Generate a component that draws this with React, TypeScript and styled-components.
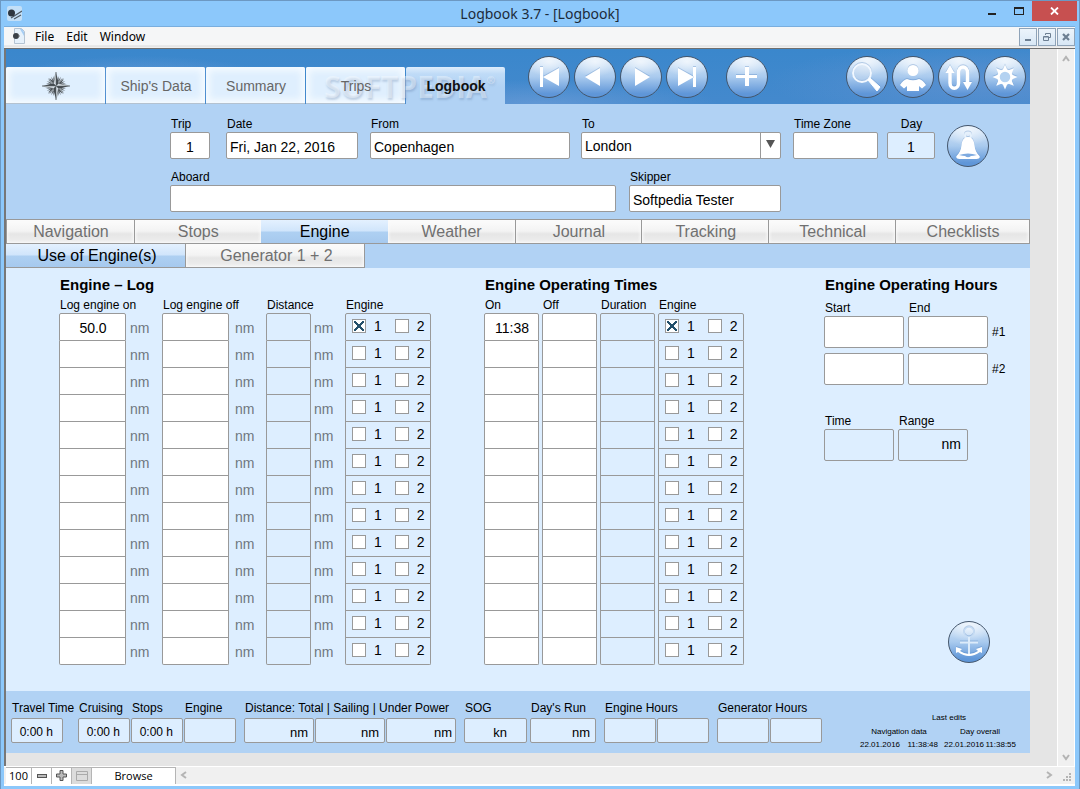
import React from "react";
import styled, { createGlobalStyle, css } from "styled-components";

const LINE = "#999999";
const PANEL = "#b1d2f4";
const PALE = "#ddeeff";

const GlobalStyle = createGlobalStyle`
  *, *::before, *::after { box-sizing: border-box; }
  body { margin: 0; font-family: "Liberation Sans", Arial, sans-serif; font-size: 12px; color: #000; }
  button, input, select { font-family: inherit; color: inherit; margin: 0; padding: 0; border-radius: 0; }
  button { background: none; border: 0; }
  svg { display: block; }
`;

/* ---------- window frame ---------- */

const Frame = styled.div`
  display: flex;
  flex-direction: column;
  min-width: 1080px;
  min-height: 100vh;
  padding: 0 4px 3px 3px;
  border: 1px solid #6c98c2;
  background: #8cc8fb;
`;

const TitleBar = styled.header`
  position: relative;
  display: flex;
  align-items: flex-start;
  justify-content: space-between;
  height: 26px;
  border-bottom: 1px solid #79aede;
`;

const AppIcon = styled.div`
  padding: 5px 0 0 3px;
`;

const Title = styled.h1`
  flex: 1;
  margin: 0;
  padding-left: 80px;
  font: 400 14px/26px "Noto Sans", "Open Sans", sans-serif;
  text-align: center;
  color: #1c2b3a;
`;

const WindowButtons = styled.div`
  display: flex;
  margin-right: -2px;
`;

const WindowButton = styled.button<{ $close?: boolean }>`
  display: flex;
  align-items: center;
  justify-content: center;
  width: ${(p) => (p.$close ? 45 : 27)}px;
  height: 20px;
  background: ${(p) => (p.$close ? "#c75050" : "transparent")};
`;

const Client = styled.div`
  display: flex;
  flex: 1;
  flex-direction: column;
  background: #fff;
`;

const MenuBar = styled.nav`
  display: flex;
  align-items: flex-start;
  height: 22px;
  padding: 1px 0 0 8px;
  border-bottom: 1px solid #6f6f6f;
  background: linear-gradient(#f5f6f7 18px, #dcdcdc 19px, #f0f0f0 20px);
`;

const MenuItem = styled.button`
  margin-left: 6px;
  padding: 0 3px;
  font: 12px/18px "Noto Sans", "Open Sans", sans-serif;
`;

const MdiButtons = styled.div`
  display: flex;
  gap: 1px;
  margin-left: auto;
`;

const MdiButton = styled.button`
  display: flex;
  align-items: center;
  justify-content: center;
  width: 18px;
  height: 18px;
  border: 1px solid #8fa3b8;
  background: linear-gradient(#ecf4fb, #d8e7f5);
`;

const Workspace = styled.div`
  display: grid;
  flex: 1;
  grid-template-columns: minmax(0, 1fr) 27px 18px;
  border-left: 1px solid #777;
`;

const Page = styled.main`
  display: flex;
  flex-direction: column;
  padding-bottom: 13px;
  border-left: 1px solid #777;
  background: #e5e5e5;
`;

const Gutter = styled.div`
  background: #e5e5e5;
`;

const VerticalScroll = styled.div`
  display: flex;
  flex-direction: column;
  align-items: center;
  justify-content: space-between;
  padding: 6px 0 5px;
  border-left: 1px solid #fff;
  border-right: 1px solid #fff;
  background: #f0f0f0;
`;

/* ---------- photo header ---------- */

const Banner = styled.div`
  position: relative;
  display: flex;
  align-items: flex-end;
  height: 55px;
  padding-right: 4px;
  background:
    radial-gradient(ellipse 140px 26px at 13% 60%, rgba(125, 165, 220, 0.6), transparent),
    radial-gradient(ellipse 180px 24px at 52% 100%, rgba(125, 165, 220, 0.5), transparent),
    radial-gradient(ellipse 220px 40px at 96% 60%, rgba(110, 150, 210, 0.55), transparent),
    linear-gradient(#3a87cc, #4489cd);
`;

const MainTabs = styled.div`
  display: flex;
  gap: 1px;
`;

const MainTab = styled.button<{ $active?: boolean }>`
  display: flex;
  align-items: center;
  justify-content: center;
  width: 99px;
  height: 37px;
  padding: 1px 0 0 1px;
  border-radius: 2px 2px 0 0;
  border-bottom: 1px solid ${(p) => (p.$active ? PANEL : "#b4c2d0")};
  font-size: 14px;
  font-weight: ${(p) => (p.$active ? 700 : 400)};
  color: ${(p) => (p.$active ? "#111" : "#666")};
  background: ${(p) => (p.$active ? `linear-gradient(#deedfc, #bfdbf7 7px, ${PANEL} 20px)` : "#dfeffe")};
  box-shadow: ${(p) => (p.$active ? "none" : "inset 0 0 7px 3px #f8fcff")};
`;

const TabText = styled.span`
  position: relative;
  z-index: 2;
`;

const Watermark = styled.div`
  position: absolute;
  z-index: 1;
  left: 318px;
  top: 18px;
  font: 700 30px/40px "Open Sans", "Noto Sans", sans-serif;
  color: rgba(255, 255, 255, 0.38);
  text-shadow: 1px 2px 2px rgba(90, 120, 160, 0.28);
  pointer-events: none;

  sup { font-size: 10px; line-height: 10px; vertical-align: 14px; }
`;

const RoundGroup = styled.div<{ $push?: boolean; $before?: number }>`
  display: flex;
  gap: 4px;
  margin-bottom: 6px;
  margin-left: ${(p) => (p.$push ? "auto" : `${p.$before ?? 0}px`)};
`;

const Round = styled.button`
  flex: none;
  width: 42px;
  height: 42px;
  border: 1px solid #44566c;
  border-radius: 50%;
  background:
    radial-gradient(ellipse 24px 15px at 50% 12%, rgba(255, 255, 255, 0.65), transparent),
    linear-gradient(#dcebfa, #a9caee 50%, #5f96d8 92%);

  svg { margin: -1px; filter: drop-shadow(0 -1px 0 rgba(80, 130, 190, 0.35)); }
`;

/* ---------- trip form ---------- */

const TripForm = styled.form`
  display: flex;
  flex-direction: column;
  gap: 10px;
  padding: 12px 0 7px 164px;
  background: ${PANEL};
`;

const FormRow = styled.div`
  display: flex;
  align-items: flex-end;
`;

const Field = styled.label<{ $w: number; $before?: number; $center?: boolean }>`
  flex: none;
  width: ${(p) => p.$w}px;
  margin-left: ${(p) => p.$before ?? 0}px;
  white-space: nowrap;
  text-align: ${(p) => (p.$center ? "center" : "left")};
`;

const Caption = styled.span`
  display: block;
  padding-left: 1px;
  font-size: 12px;
  line-height: 16px;
`;

const boxStyle = css`
  display: block;
  width: 100%;
  border: 1px solid ${LINE};
  border-radius: 2px;
  outline: 0;
  font-size: 14px;
`;

const TextBox = styled.input<{ $pale?: boolean; $align?: string }>`
  ${boxStyle}
  height: 27px;
  padding: 2px 3px 0;
  background: ${(p) => (p.$pale ? PALE : "#fff")};
  text-align: ${(p) => p.$align ?? "left"};
`;

const SelectWrap = styled.span`
  position: relative;
  display: block;
`;

const Select = styled.select`
  ${boxStyle}
  appearance: none;
  height: 27px;
  padding: 1px 24px 0 3px;
  background: #fff;
`;

const SelectArrow = styled.span`
  position: absolute;
  top: 1px;
  right: 1px;
  bottom: 1px;
  width: 20px;
  padding: 7px 0 0 5px;
  border-left: 1px solid ${LINE};
  pointer-events: none;
`;

const BellSlot = styled.div`
  height: 27px;
  margin-left: 12px;

  button { margin-top: -7px; }
`;

/* ---------- tab strips ---------- */

const TabStrip = styled.div`
  display: grid;
  grid-template-columns: repeat(7, 127fr) 134fr;
  border: 1px solid ${LINE};
`;

const SubTabStrip = styled.div`
  display: flex;
  background: ${PANEL};
`;

const StripTab = styled.button<{ $active?: boolean }>`
  height: 23px;
  padding-left: 1px;
  font-size: 16px;
  line-height: 22px;
  color: ${(p) => (p.$active ? "#000" : "#707070")};
  background: ${(p) =>
    p.$active
      ? "linear-gradient(#e4f1ff, #d0e5fb 11px, #aed0f2 12px, #a6c9ee)"
      : "linear-gradient(#fcfcfc, #f3f3f3 11px, #e6e6e6 14px, #eeeeee)"};
  box-shadow: ${(p) => (p.$active ? "none" : "inset 0 0 3px 1px #fafafa")};

  ${TabStrip} & + & { border-left: 1px solid ${LINE}; }
  ${SubTabStrip} & {
    width: 179px;
    height: 24px;
    padding-left: 3px;
    border-right: 1px solid ${LINE};
    border-bottom: 1px solid ${LINE};
  }
  ${SubTabStrip} &:first-child { width: 180px; }
`;

/* ---------- body ---------- */

const Body = styled.section`
  display: flex;
  flex: 1;
  align-items: stretch;
  padding: 8px 0 26px 53px;
  background: ${PALE};
`;

const Panel = styled.section<{ $before?: number }>`
  display: flex;
  flex-direction: column;
  margin-left: ${(p) => p.$before ?? 0}px;
`;

const PanelTitle = styled.h2`
  margin: 0;
  padding-left: 1px;
  font-size: 15px;
  line-height: 18px;
  font-weight: 700;
  white-space: nowrap;
`;

const LogTable = styled.table`
  table-layout: fixed;
  border-collapse: separate;
  border-spacing: 0;
`;

const Head = styled.th<{ $w: number }>`
  width: ${(p) => p.$w}px;
  height: 19px;
  padding: 3px 0 0 1px;
  font-size: 12px;
  line-height: 16px;
  font-weight: 400;
  text-align: left;
  white-space: nowrap;
`;

const Cell = styled.td`
  padding: 0;
`;

const CellRow = styled.div`
  display: flex;
  align-items: center;
`;

const cellBox = css`
  height: 27px;
  border: 1px solid ${LINE};
  border-top-width: 0;

  tr:first-child & { height: 28px; border-top-width: 1px; border-radius: 2px 2px 0 0; }
  tr:last-child & { border-radius: 0 0 2px 2px; }
`;

const CellInput = styled.input<{ $w: number; $pale?: boolean }>`
  ${cellBox}
  width: ${(p) => p.$w}px;
  padding: 2px 0 0 1px;
  outline: 0;
  font-size: 14px;
  text-align: center;
  background: ${(p) => (p.$pale ? PALE : "#fff")};
`;

const Unit = styled.span<{ $gap?: number }>`
  padding: 1px 0 0 ${(p) => p.$gap ?? 4}px;
  font-size: 14px;
  line-height: 16px;
  color: #6f7780;
`;

const EngineBox = styled.div`
  ${cellBox}
  display: flex;
  align-items: center;
  gap: 13px;
  width: 86px;
  padding: 0 0 2px 6px;
  background: ${PALE};
`;

const Check = styled.label`
  display: flex;
  align-items: center;
  gap: 8px;
  font-size: 14px;
  line-height: 16px;

  input {
    appearance: none;
    width: 14px;
    height: 14px;
    border: 1px solid ${LINE};
    background: #fff;
  }
  input:checked {
    background:
      linear-gradient(to top right, transparent 43%, #24506b 44%, #24506b 56%, transparent 57%) center / 10px 10px no-repeat,
      linear-gradient(to bottom right, transparent 43%, #24506b 44%, #24506b 56%, transparent 57%) center / 10px 10px no-repeat,
      #fff;
  }
`;

const HoursGrid = styled.div`
  display: grid;
  grid-template-columns: 80px 80px auto;
  gap: 5px 4px;
  align-items: center;
  padding-top: 6px;
`;

const HoursHead = styled(Caption)`
  margin-bottom: -5px;
`;

const TallBox = styled.input<{ $pale?: boolean }>`
  ${boxStyle}
  height: 32px;
  padding: 0 6px 2px;
  background: ${(p) => (p.$pale ? PALE : "#fff")};
  text-align: right;
`;

const RangeRow = styled.div`
  display: flex;
  gap: 4px;
  margin-top: 28px;
`;

const AnchorSlot = styled.div`
  margin-top: auto;
  padding-left: 124px;
`;

/* ---------- totals footer ---------- */

const Totals = styled.footer`
  display: flex;
  align-items: flex-start;
  padding: 9px 14px 2px 5px;
  background: ${PANEL};
`;

const Cluster = styled.div<{ $before?: number }>`
  margin-left: ${(p) => p.$before ?? 0}px;
`;

const ClusterCaption = styled(Caption)`
  width: 0;
  padding-bottom: 2px;
  line-height: 16px;
  white-space: nowrap;
`;

const ClusterBoxes = styled.div`
  display: flex;
  gap: 1px;
`;

const TotalBox = styled.input<{ $w: number; $pad?: number; $size?: number }>`
  width: ${(p) => p.$w}px;
  height: 25px;
  padding: 3px ${(p) => p.$pad ?? 5}px 0 0;
  border: 1px solid ${LINE};
  border-radius: 2px;
  outline: 0;
  font-size: ${(p) => p.$size ?? 13}px;
  text-align: right;
  background: ${PALE};
`;

const Edits = styled.div`
  margin: 11px 0 0 auto;
  font-size: 8px;
  line-height: 14px;
  text-align: center;
`;

const EditsTitle = styled.div`
  padding-left: 22px;
`;

const EditsRow = styled.div`
  display: grid;
  grid-template-columns: 78px 72px;
  gap: 6px;
  line-height: 13px;
  white-space: nowrap;
`;

const Stamp = styled.div`
  display: flex;
  justify-content: space-between;
`;

/* ---------- status bar ---------- */

const StatusBar = styled.div`
  display: flex;
  height: 20px;
  padding-left: 2px;
  border-top: 1px solid #fff;
  border-bottom: 2px solid #fff;
  background: #f0f0f0;
  font: 11px/18px "Open Sans", "Noto Sans", sans-serif;
`;

const StatusButton = styled.button<{ $w: number; $grey?: boolean }>`
  display: flex;
  align-items: center;
  justify-content: center;
  width: ${(p) => p.$w}px;
  padding-bottom: 1px;
  border-top: 1px solid #b5b5b5;
  border-right: 1px solid #b5b5b5;
  background: ${(p) => (p.$grey ? "#dcdcdc" : "#fff")};
  font-size: 11px;
`;

const HorizontalScroll = styled.div`
  display: flex;
  flex: 1;
  align-items: center;
  justify-content: space-between;
  padding: 0 10px 2px 4px;
`;

const Grip = styled.div`
  display: flex;
  align-items: flex-end;
  padding: 0 4px 3px 0;
`;

/* ---------- drawings ---------- */

const Glyph = ({ children }: { children: React.ReactNode }) => (
  <svg width="42" height="42" viewBox="0 0 42 42" fill="#fff" aria-hidden="true">
    {children}
  </svg>
);

const First = () => <Glyph><path d="M12 11h3v20h-3zM31 12v18L15 21z" /></Glyph>;
const Prev = () => <Glyph><path d="M26 12v18L11 21z" /></Glyph>;
const Next = () => <Glyph><path d="M15 12v18L30 21z" /></Glyph>;
const Last = () => <Glyph><path d="M27 11h3v20h-3zM12 12v18L28 21z" /></Glyph>;
const Plus = () => <Glyph><path d="M19 11h4v8h8v3h-8v8h-4v-8h-9v-3h9z" /></Glyph>;

const Magnifier = () => (
  <Glyph>
    <circle cx="16" cy="17" r="9" fill="rgba(255,255,255,.25)" stroke="#f2f8ff" strokeWidth="2" />
    <path d="M22 24l2-2 10 9-3 4z" stroke="#fff" strokeWidth="1" strokeLinejoin="round" />
  </Glyph>
);

const Person = () => (
  <Glyph>
    <circle cx="21" cy="14.500" r="5.500" />
    <path d="M15 23q6 2.500 12 0 4 1 7 6l-4 3.500-3-2.500v5H15v-5l-3 2.500L8 29q3-5 7-6z" />
  </Glyph>
);

const Route = () => (
  <Glyph>
    <path d="M12 16v11c0 7 8.500 7 8.500 0V17c0-8 9-8 9 0v10" fill="none" stroke="#fff" strokeWidth="3.500" />
    <path d="M12 9l4.500 8h-9zM29.500 34L25 26h9z" />
  </Glyph>
);

const Sun = () => (
  <Glyph>
    {[0, 45, 90, 135, 180, 225, 270, 315].map((a) => (
      <path key={a} d="M21 8.500l3 7h-6z" transform={`rotate(${a} 21 21)`} />
    ))}
    <circle cx="21" cy="21" r="6.500" fill="#b4d2f1" stroke="#fff" strokeWidth="2.500" />
  </Glyph>
);

const Bell = () => (
  <Glyph>
    <circle cx="21" cy="10.500" r="3" fill="none" stroke="#e6f1fc" strokeWidth="2" />
    <path d="M21 12c4.500 0 6 4 6.500 8 .500 5 2 8 5 11 1 2-1 3-3 3h-17c-2 0-4-1-3-3 3-3 4.500-6 5-11 .500-4 2-8 6.500-8z" />
    <path d="M12 30q9-3 18 0-4 1-6 1-3 2.500-6 0-2 0-6-1z" fill="#7fabe0" />
  </Glyph>
);

const Anchor = () => (
  <Glyph>
    <circle cx="21" cy="11" r="5" fill="none" stroke="#c6dcf4" strokeWidth="1.500" />
    <path d="M21 16v18M12 21.500h18" fill="none" stroke="#dcebfa" strokeWidth="2" />
    <path d="M8 26l6 2-2 2q9 6 18 0l-2-2 6-2v6l-2-1q-11 8-22 0l-2 1z" />
  </Glyph>
);

const Compass = () => (
  <svg width="28" height="28" viewBox="-14 -14 28 28" aria-hidden="true">
    {Array.from({ length: 32 }, (_, i) => (
      <path key={i} d="M0-10.500L1-4h-2z" fill="#5d6469" transform={`rotate(${i * 11.25 + 5.625})`} />
    ))}
    {[45, 135, 225, 315].map((a) => (
      <g key={a} transform={`rotate(${a})`}>
        <path d="M0-11L2.500-2 0 0z" fill="#4c5358" />
        <path d="M0-11L-2.500-2 0 0z" fill="#9aa2a8" />
      </g>
    ))}
    {[0, 90, 180, 270].map((a) => (
      <g key={a} transform={`rotate(${a})`}>
        <path d="M0-14L2.500-2.500 0 0z" fill="#43494e" />
        <path d="M0-14L-2.500-2.500 0 0z" fill="#d5dde3" />
        <path d="M0-14L-2.500-2.500 0 0z" fill="none" stroke="#5d6469" strokeWidth=".5" />
      </g>
    ))}
  </svg>
);

const LogoMark = () => (
  <svg width="15" height="15" viewBox="0 0 15 15" aria-hidden="true">
    <rect width="15" height="15" rx="2" fill="#c3dff7" />
    <path d="M4 12l11-7M7 13l7-4" stroke="#4d5862" strokeWidth="1.200" />
    <circle cx="4.500" cy="7" r="3.500" fill="#2d3640" />
  </svg>
);

const PageMark = () => (
  <svg width="14" height="16" viewBox="0 0 14 16" aria-hidden="true">
    <path d="M2.500.5h7l3 3v12h-10z" fill="#e6f1fb" stroke="#b4c3d2" />
    <path d="M8 1h2l2 3v4z" fill="#a5cdf3" />
    <circle cx="4" cy="8" r="3" fill="#3a4047" />
    <path d="M6 8h2" stroke="#777" />
  </svg>
);

const Chevron = ({ turn = 0 }: { turn?: number }) => (
  <svg width="8" height="8" viewBox="0 0 8 8" aria-hidden="true">
    <path d="M1 6l3-4 3 4" fill="none" stroke="#b4b4b4" strokeWidth="2" transform={`rotate(${turn} 4 4)`} />
  </svg>
);

/* ---------- data ---------- */

const ROWS = Array.from({ length: 13 }, (_, i) => i);
const TABS = ["Navigation", "Stops", "Engine", "Weather", "Journal", "Tracking", "Technical", "Checklists"];

const EngineChecks = ({ row }: { row: number }) => (
  <EngineBox>
    <Check><input type="checkbox" defaultChecked={row === 0} />1</Check>
    <Check><input type="checkbox" />2</Check>
  </EngineBox>
);

export default function App() {
  return (
    <Frame>
      <GlobalStyle />
      <TitleBar>
        <AppIcon><LogoMark /></AppIcon>
        <Title>Logbook 3.7 - [Logbook]</Title>
        <WindowButtons>
          <WindowButton aria-label="Minimize">
            <svg width="10" height="10"><path d="M1 7h8v2H1z" fill="#222" /></svg>
          </WindowButton>
          <WindowButton aria-label="Maximize">
            <svg width="10" height="8"><path d="M0 0h10v8H0zM1 2v5h8V2z" fill="#222" fillRule="evenodd" /></svg>
          </WindowButton>
          <WindowButton $close aria-label="Close">
            <svg width="9" height="8"><path d="M1 .5l7 7M8 .5l-7 7" stroke="#fff" strokeWidth="1.800" /></svg>
          </WindowButton>
        </WindowButtons>
      </TitleBar>

      <Client>
        <MenuBar>
          <PageMark />
          <MenuItem>File</MenuItem>
          <MenuItem>Edit</MenuItem>
          <MenuItem>Window</MenuItem>
          <MdiButtons>
            <MdiButton aria-label="Minimize document">
              <svg width="8" height="8"><path d="M1 6h6v2H1z" fill="#6d7f92" /></svg>
            </MdiButton>
            <MdiButton aria-label="Restore document">
              <svg width="8" height="8" fill="none" stroke="#6d7f92"><path d="M2.500 2V.5h5v4H6M.5 3.500h5v4h-5zM1 4h4" /></svg>
            </MdiButton>
            <MdiButton aria-label="Close document">
              <svg width="8" height="8"><path d="M1 1l6 6M7 1L1 7" stroke="#6d7f92" strokeWidth="2.200" /></svg>
            </MdiButton>
          </MdiButtons>
        </MenuBar>

        <Workspace>
          <Page>
            <Banner>
              <MainTabs>
                <MainTab aria-label="Home"><Compass /></MainTab>
                <MainTab>Ship's Data</MainTab>
                <MainTab>Summary</MainTab>
                <MainTab><TabText>Trips</TabText></MainTab>
                <MainTab $active><TabText>Logbook</TabText></MainTab>
              </MainTabs>
              <Watermark>SOFTPEDIA<sup>®</sup></Watermark>
              <RoundGroup $before={23}>
                <Round aria-label="First record"><First /></Round>
                <Round aria-label="Previous record"><Prev /></Round>
                <Round aria-label="Next record"><Next /></Round>
                <Round aria-label="Last record"><Last /></Round>
              </RoundGroup>
              <RoundGroup $before={18}>
                <Round aria-label="New record"><Plus /></Round>
              </RoundGroup>
              <RoundGroup $push>
                <Round aria-label="Search"><Magnifier /></Round>
                <Round aria-label="Crew"><Person /></Round>
                <Round aria-label="Route"><Route /></Round>
                <Round aria-label="Settings"><Sun /></Round>
              </RoundGroup>
            </Banner>

            <TripForm>
              <FormRow>
                <Field $w={40}><Caption>Trip</Caption><TextBox $align="center" defaultValue="1" /></Field>
                <Field $w={132} $before={16}><Caption>Date</Caption><TextBox defaultValue="Fri, Jan 22, 2016" /></Field>
                <Field $w={200} $before={12}><Caption>From</Caption><TextBox defaultValue="Copenhagen" /></Field>
                <Field $w={200} $before={11}>
                  <Caption>To</Caption>
                  <SelectWrap>
                    <Select defaultValue="London"><option>London</option></Select>
                    <SelectArrow>
                      <svg width="9" height="8"><path d="M0 0h9L4.500 8z" fill="#555" /></svg>
                    </SelectArrow>
                  </SelectWrap>
                </Field>
                <Field $w={85} $before={12}><Caption>Time Zone</Caption><TextBox /></Field>
                <Field $w={48} $before={9} $center><Caption>Day</Caption><TextBox $pale $align="center" defaultValue="1" /></Field>
                <BellSlot><Round type="button" aria-label="Alarm"><Bell /></Round></BellSlot>
              </FormRow>
              <FormRow>
                <Field $w={446}><Caption>Aboard</Caption><TextBox /></Field>
                <Field $w={152} $before={13}><Caption>Skipper</Caption><TextBox defaultValue="Softpedia Tester" /></Field>
              </FormRow>
            </TripForm>

            <TabStrip>
              {TABS.map((t) => <StripTab key={t} $active={t === "Engine"}>{t}</StripTab>)}
            </TabStrip>
            <SubTabStrip>
              <StripTab $active>Use of Engine(s)</StripTab>
              <StripTab>Generator 1 + 2</StripTab>
            </SubTabStrip>

            <Body>
              <Panel>
                <PanelTitle>Engine – Log</PanelTitle>
                <LogTable>
                  <thead>
                    <tr>
                      <Head $w={103}>Log engine on</Head>
                      <Head $w={104}>Log engine off</Head>
                      <Head $w={79}>Distance</Head>
                      <Head $w={86}>Engine</Head>
                    </tr>
                  </thead>
                  <tbody>
                    {ROWS.map((r) => (
                      <tr key={r}>
                        <Cell><CellRow><CellInput $w={67} aria-label="Log engine on" defaultValue={r === 0 ? "50.0" : ""} /><Unit>nm</Unit></CellRow></Cell>
                        <Cell><CellRow><CellInput $w={67} aria-label="Log engine off" /><Unit $gap={6}>nm</Unit></CellRow></Cell>
                        <Cell><CellRow><CellInput $w={45} $pale aria-label="Distance" /><Unit $gap={3}>nm</Unit></CellRow></Cell>
                        <Cell><EngineChecks row={r} /></Cell>
                      </tr>
                    ))}
                  </tbody>
                </LogTable>
              </Panel>

              <Panel $before={53}>
                <PanelTitle>Engine Operating Times</PanelTitle>
                <LogTable>
                  <thead>
                    <tr>
                      <Head $w={58}>On</Head>
                      <Head $w={58}>Off</Head>
                      <Head $w={58}>Duration</Head>
                      <Head $w={86}>Engine</Head>
                    </tr>
                  </thead>
                  <tbody>
                    {ROWS.map((r) => (
                      <tr key={r}>
                        <Cell><CellRow><CellInput $w={55} aria-label="On" defaultValue={r === 0 ? "11:38" : ""} /></CellRow></Cell>
                        <Cell><CellRow><CellInput $w={55} aria-label="Off" /></CellRow></Cell>
                        <Cell><CellRow><CellInput $w={55} $pale aria-label="Duration" /></CellRow></Cell>
                        <Cell><EngineChecks row={r} /></Cell>
                      </tr>
                    ))}
                  </tbody>
                </LogTable>
              </Panel>

              <Panel $before={80}>
                <PanelTitle>Engine Operating Hours</PanelTitle>
                <HoursGrid>
                  <HoursHead>Start</HoursHead>
                  <HoursHead>End</HoursHead>
                  <span />
                  <TallBox aria-label="Start #1" />
                  <TallBox aria-label="End #1" />
                  <span>#1</span>
                  <TallBox aria-label="Start #2" />
                  <TallBox aria-label="End #2" />
                  <span>#2</span>
                </HoursGrid>
                <RangeRow>
                  <Field $w={70}><Caption>Time</Caption><TallBox $pale readOnly /></Field>
                  <Field $w={70}><Caption>Range</Caption><TallBox $pale readOnly value="nm" /></Field>
                </RangeRow>
                <AnchorSlot><Round aria-label="Anchor"><Anchor /></Round></AnchorSlot>
              </Panel>
            </Body>

            <Totals>
              <Cluster>
                <ClusterCaption>Travel Time</ClusterCaption>
                <ClusterBoxes><TotalBox $w={52} $pad={9} $size={12} readOnly value="0:00 h" aria-label="Travel Time" /></ClusterBoxes>
              </Cluster>
              <Cluster $before={15}>
                <ClusterCaption>Cruising</ClusterCaption>
                <ClusterBoxes><TotalBox $w={52} $pad={9} $size={12} readOnly value="0:00 h" aria-label="Cruising" /></ClusterBoxes>
              </Cluster>
              <Cluster $before={1}>
                <ClusterCaption>Stops</ClusterCaption>
                <ClusterBoxes><TotalBox $w={52} $pad={9} $size={12} readOnly value="0:00 h" aria-label="Stops" /></ClusterBoxes>
              </Cluster>
              <Cluster $before={1}>
                <ClusterCaption>Engine</ClusterCaption>
                <ClusterBoxes><TotalBox $w={52} readOnly aria-label="Engine" /></ClusterBoxes>
              </Cluster>
              <Cluster $before={8}>
                <ClusterCaption>Distance: Total | Sailing | Under Power</ClusterCaption>
                <ClusterBoxes>
                  <TotalBox $w={70} readOnly value="nm" aria-label="Total distance" />
                  <TotalBox $w={70} readOnly value="nm" aria-label="Distance sailing" />
                  <TotalBox $w={70} $pad={3} readOnly value="nm" aria-label="Distance under power" />
                </ClusterBoxes>
              </Cluster>
              <Cluster $before={8}>
                <ClusterCaption>SOG</ClusterCaption>
                <ClusterBoxes><TotalBox $w={63} $pad={19} readOnly value="kn" aria-label="SOG" /></ClusterBoxes>
              </Cluster>
              <Cluster $before={3}>
                <ClusterCaption>Day's Run</ClusterCaption>
                <ClusterBoxes><TotalBox $w={66} readOnly value="nm" aria-label="Day's Run" /></ClusterBoxes>
              </Cluster>
              <Cluster $before={8}>
                <ClusterCaption>Engine Hours</ClusterCaption>
                <ClusterBoxes>
                  <TotalBox $w={52} readOnly aria-label="Engine 1 hours" />
                  <TotalBox $w={52} readOnly aria-label="Engine 2 hours" />
                </ClusterBoxes>
              </Cluster>
              <Cluster $before={8}>
                <ClusterCaption>Generator Hours</ClusterCaption>
                <ClusterBoxes>
                  <TotalBox $w={52} readOnly aria-label="Generator 1 hours" />
                  <TotalBox $w={52} readOnly aria-label="Generator 2 hours" />
                </ClusterBoxes>
              </Cluster>
              <Edits>
                <EditsTitle>Last edits</EditsTitle>
                <EditsRow><span>Navigation data</span><span>Day overall</span></EditsRow>
                <EditsRow>
                  <Stamp><span>22.01.2016</span><span>11:38:48</span></Stamp>
                  <Stamp><span>22.01.2016</span><span>11:38:55</span></Stamp>
                </EditsRow>
              </Edits>
            </Totals>
          </Page>
          <Gutter />
          <VerticalScroll><Chevron /><Chevron turn={180} /></VerticalScroll>
        </Workspace>

        <StatusBar>
          <StatusButton $w={26}>100</StatusButton>
          <StatusButton $w={20} aria-label="Zoom out">
            <svg width="10" height="4"><rect x=".5" y=".5" width="9" height="3" fill="#bbb" stroke="#555" /></svg>
          </StatusButton>
          <StatusButton $w={20} aria-label="Zoom in">
            <svg width="11" height="11"><path d="M4 .5h3V4h3.500v3H7v3.500H4V7H.5V4H4z" fill="#bbb" stroke="#555" /></svg>
          </StatusButton>
          <StatusButton $w={20} $grey aria-label="Toggle toolbar">
            <svg width="12" height="10" fill="none" stroke="#aaa"><path d="M.5.5h11v9H.5zM0 3.500h12" /></svg>
          </StatusButton>
          <StatusButton $w={84}>Browse</StatusButton>
          <HorizontalScroll><Chevron turn={-90} /><Chevron turn={90} /></HorizontalScroll>
          <Grip>
            <svg width="8" height="8" fill="#b4b4b4"><path d="M6 0h2v2H6zM3 3h2v2H3zM6 3h2v2H6zM0 6h2v2H0zM3 6h2v2H3zM6 6h2v2H6z" /></svg>
          </Grip>
        </StatusBar>
      </Client>
    </Frame>
  );
}
